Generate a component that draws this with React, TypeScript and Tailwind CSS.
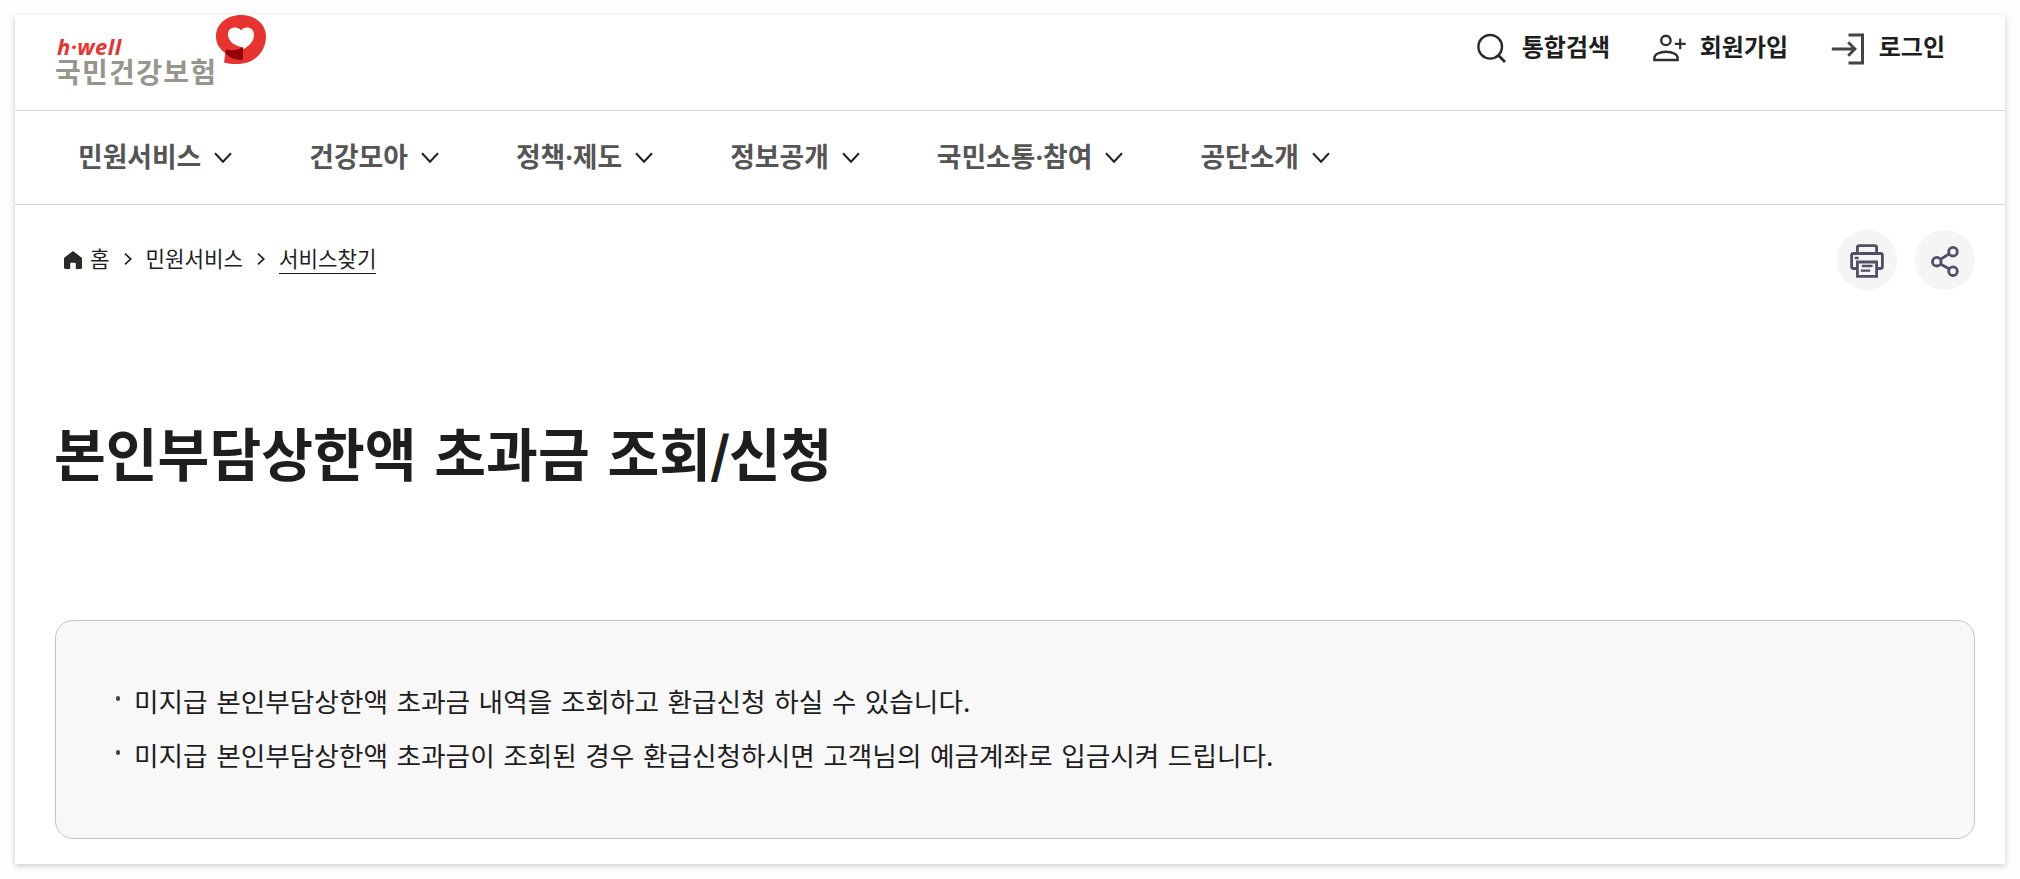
import React from 'react';

interface IconProps {
    className?: string;
}

const NAV_ITEMS = ['민원서비스', '건강모아', '정책·제도', '정보공개', '국민소통·참여', '공단소개'];

const NOTICES = [
    '미지급 본인부담상한액 초과금 내역을 조회하고 환급신청 하실 수 있습니다.',
    '미지급 본인부담상한액 초과금이 조회된 경우 환급신청하시면 고객님의 예금계좌로 입금시켜 드립니다.',
];

const ChevronDown: React.FC<IconProps> = ({ className }) => (
    <svg className={className} viewBox="0 0 18 12" fill="none" stroke="#222" strokeWidth="2">
        <path d="M1 1.2 9 9.8 17 1.2" />
    </svg>
);

const ChevronRight: React.FC<IconProps> = ({ className }) => (
    <svg className={className} viewBox="0 0 8 12" fill="none" stroke="#222" strokeWidth="1.7">
        <path d="M1 .7 6.8 6 1 11.3" />
    </svg>
);

const SearchIcon: React.FC<IconProps> = ({ className }) => (
    <svg className={className} viewBox="0 0 30 30" fill="none" stroke="#2a2a2a" strokeWidth="2.4">
        <circle cx="13.2" cy="13.8" r="11.8" />
        <path d="m21.4 22.3 6.6 6.6" strokeWidth="2.8" />
    </svg>
);

const JoinIcon: React.FC<IconProps> = ({ className }) => (
    <svg className={className} viewBox="0 0 33 28" fill="none" stroke="#2e2e2e" strokeWidth="2.4">
        <circle cx="12.9" cy="6.4" r="4.7" />
        <path d="M1.4 26v-2.2c0-3.4 5.2-6 11.6-6s11.6 2.6 11.6 6v2.2Z" />
        <path d="M27.2 4.4v10.8M21.8 9.8h10.9" strokeWidth="2.2" />
    </svg>
);

const LoginIcon: React.FC<IconProps> = ({ className }) => (
    <svg className={className} viewBox="0 0 34 32" fill="none" stroke="#444" strokeWidth="3">
        <path d="M17.5 2h14v28h-14" />
        <path d="M.8 16H24M17.2 9.2 24 16l-6.8 6.8" strokeWidth="2.8" />
    </svg>
);

const HomeIcon: React.FC<IconProps> = ({ className }) => (
    <svg className={className} viewBox="0 0 18 18" fill="#2a2a2a">
        <path d="M9 0 .6 6.4Q0 6.9 0 7.6v9Q0 18 1.4 18h4.8v-5.2q0-1 1-1h3.6q1 0 1 1V18h4.8q1.4 0 1.4-1.4v-9q0-.7-.6-1.2Z" />
    </svg>
);

const PrintIcon: React.FC<IconProps> = ({ className }) => (
    <svg className={className} viewBox="0 0 34 34" fill="none" stroke="#4f4f66" strokeWidth="2.8">
        <path d="M7.4 9.5V3.4q0-1.8 1.8-1.8h15.6q1.8 0 1.8 1.8v6.1" />
        <path d="M7.2 24.5H3.6q-2 0-2-2v-11q0-2 2-2h26.8q2 0 2 2v11q0 2-2 2h-3.6" />
        <path d="M7.4 18h19.2v14.4H7.4Z" />
        <path d="M4.6 14h4M11.8 22h10.8M10.8 26.6h9.4" strokeWidth="2.3" />
    </svg>
);

const ShareIcon: React.FC<IconProps> = ({ className }) => (
    <svg className={className} viewBox="0 0 28 31" fill="none" stroke="#4f4f66" strokeWidth="2.8">
        <circle cx="5.8" cy="15.7" r="4.3" />
        <circle cx="22" cy="5.7" r="4.3" />
        <circle cx="22" cy="25.2" r="4.3" />
        <path d="m9.4 13.4 9-5.6M9.4 18l9 5" />
    </svg>
);

const Logo: React.FC = () => (
    <div className="flex items-start">
        <div className="w-[161px] pt-[19px]">
            <div className="pl-[2px] font-['Open_Sans',sans-serif] text-[22px] leading-[24px] font-bold tracking-[0.4px] italic text-[#e8332f]">h·well</div>
            <div className="-mt-[3px] whitespace-nowrap text-[28px] leading-[32px] font-bold tracking-[1.3px] text-[#97968c]">국민건강보험</div>
        </div>
        <svg className="h-[50px] w-[50px]" viewBox="0 0 50 50">
            <path d="M25 0C39 0 50 9 50 21.5 50 37 38 49 21 49c-5 0-9-.6-13-1.6L9.3 38C3.5 34 0 28.5 0 21.5 0 9 11 0 25 0Z" fill="#e8332f" />
            <path d="M10.4 34.5c6 1.2 11 .8 16.6-2.3v12.5c-6.500.5-12.500-.9-17.700-6.700Z" fill="#930007" />
            <path d="M25 15.500c2.600-4.300 13-4.600 13 4.500 0 6-4.500 11-11 14.200v-2C20 31.500 12 27 12 19.500c0-8.500 10.400-8.300 13-4Z" fill="#fff" />
        </svg>
    </div>
);

export default function App() {
    return (
        <div className="h-[879px] w-[2020px] bg-[#fdfdfd] p-[15px] font-['Noto_Sans_CJK_KR',sans-serif] text-[#1e1e1e]">
            <div className="h-[849px] bg-white shadow-[0_2px_6px_rgba(0,0,0,0.2)]">
                <header className="flex h-24 items-start justify-between border-b border-[#d6d6d6] pr-[60px] pl-10">
                    <Logo />
                    <div className="flex pt-[13px] text-[24px] leading-[36px] font-bold">
                        <a className="flex w-[176px] items-start">
                            <SearchIcon className="mt-[5px] mr-[15px] h-[30px] w-[30px]" />
                            통합검색
                        </a>
                        <a className="flex w-[178px] items-start">
                            <JoinIcon className="mt-[6px] mr-[14px] h-[28px] w-[33px]" />
                            회원가입
                        </a>
                        <a className="flex items-start">
                            <LoginIcon className="mt-[5px] mr-[14px] h-[32px] w-[34px]" />
                            로그인
                        </a>
                    </div>
                </header>

                <nav className="flex h-[94px] items-center gap-[77px] border-b border-[#d6d6d6] pl-[63px] text-[26.8px] font-bold text-[#555]">
                    {NAV_ITEMS.map(item => (
                        <a key={item} className="flex items-center gap-[13px] whitespace-nowrap">
                            <span className="pb-[2px]">
                                {item.split('·').map((word, i) => (
                                    <React.Fragment key={word}>
                                        {i > 0 && <span className="font-['Open_Sans',sans-serif]">·</span>}
                                        {word}
                                    </React.Fragment>
                                ))}
                            </span>
                            <ChevronDown className="h-[12px] w-[18px]" />
                        </a>
                    ))}
                </nav>

                <main className="pr-[30px] pl-10">
                    <div className="flex items-start justify-between pt-[25px]">
                        <div className="flex items-center pt-[14px] pl-[9px] text-[21.2px] leading-[30px]">
                            <HomeIcon className="mt-[1px] mr-2 h-[18px] w-[18px]" />
                            <span className="-mt-[2px]">홈</span>
                            <ChevronRight className="mx-[14px] h-[12px] w-[8px]" />
                            <span className="-mt-[2px]">민원서비스</span>
                            <ChevronRight className="mx-[14px] h-[12px] w-[8px]" />
                            <span className="-mt-[1px] border-b border-[#1e1e1e]">서비스찾기</span>
                        </div>
                        <div className="flex gap-[18px]">
                            <button className="flex h-[60px] w-[60px] items-center justify-center rounded-full bg-[#f5f5f6] pt-[2px]">
                                <PrintIcon className="h-[34px] w-[34px]" />
                            </button>
                            <button className="flex h-[60px] w-[60px] items-center justify-center rounded-full bg-[#f5f5f6] pt-[3px]">
                                <ShareIcon className="h-[31px] w-[28px]" />
                            </button>
                        </div>
                    </div>

                    <h1 className="-ml-[1px] mt-[120px] h-[84px] text-[56.3px] leading-[84px] font-bold [word-spacing:5px]">
                        본인부담상한액 초과금 조회<span className="relative -top-[3px] -mr-[1px] text-[48px] leading-none [-webkit-text-stroke:1.2px_#1e1e1e]">/</span>신청
                    </h1>

                    <div className="mt-[126px] h-[219px] rounded-[18px] border border-[#c4c4c4] bg-[#f8f8f8] px-[60px] pt-[53px]">
                        <ul className="text-[26.7px] leading-[54px] [word-spacing:2.5px]">
                            {NOTICES.map(notice => (
                                <li key={notice} className="flex items-start whitespace-nowrap">
                                    <span className="mt-[22px] mr-[14px] h-[5px] w-[4px] rounded-full bg-[#444]" />
                                    {notice}
                                </li>
                            ))}
                        </ul>
                    </div>
                </main>
            </div>
        </div>
    );
}
